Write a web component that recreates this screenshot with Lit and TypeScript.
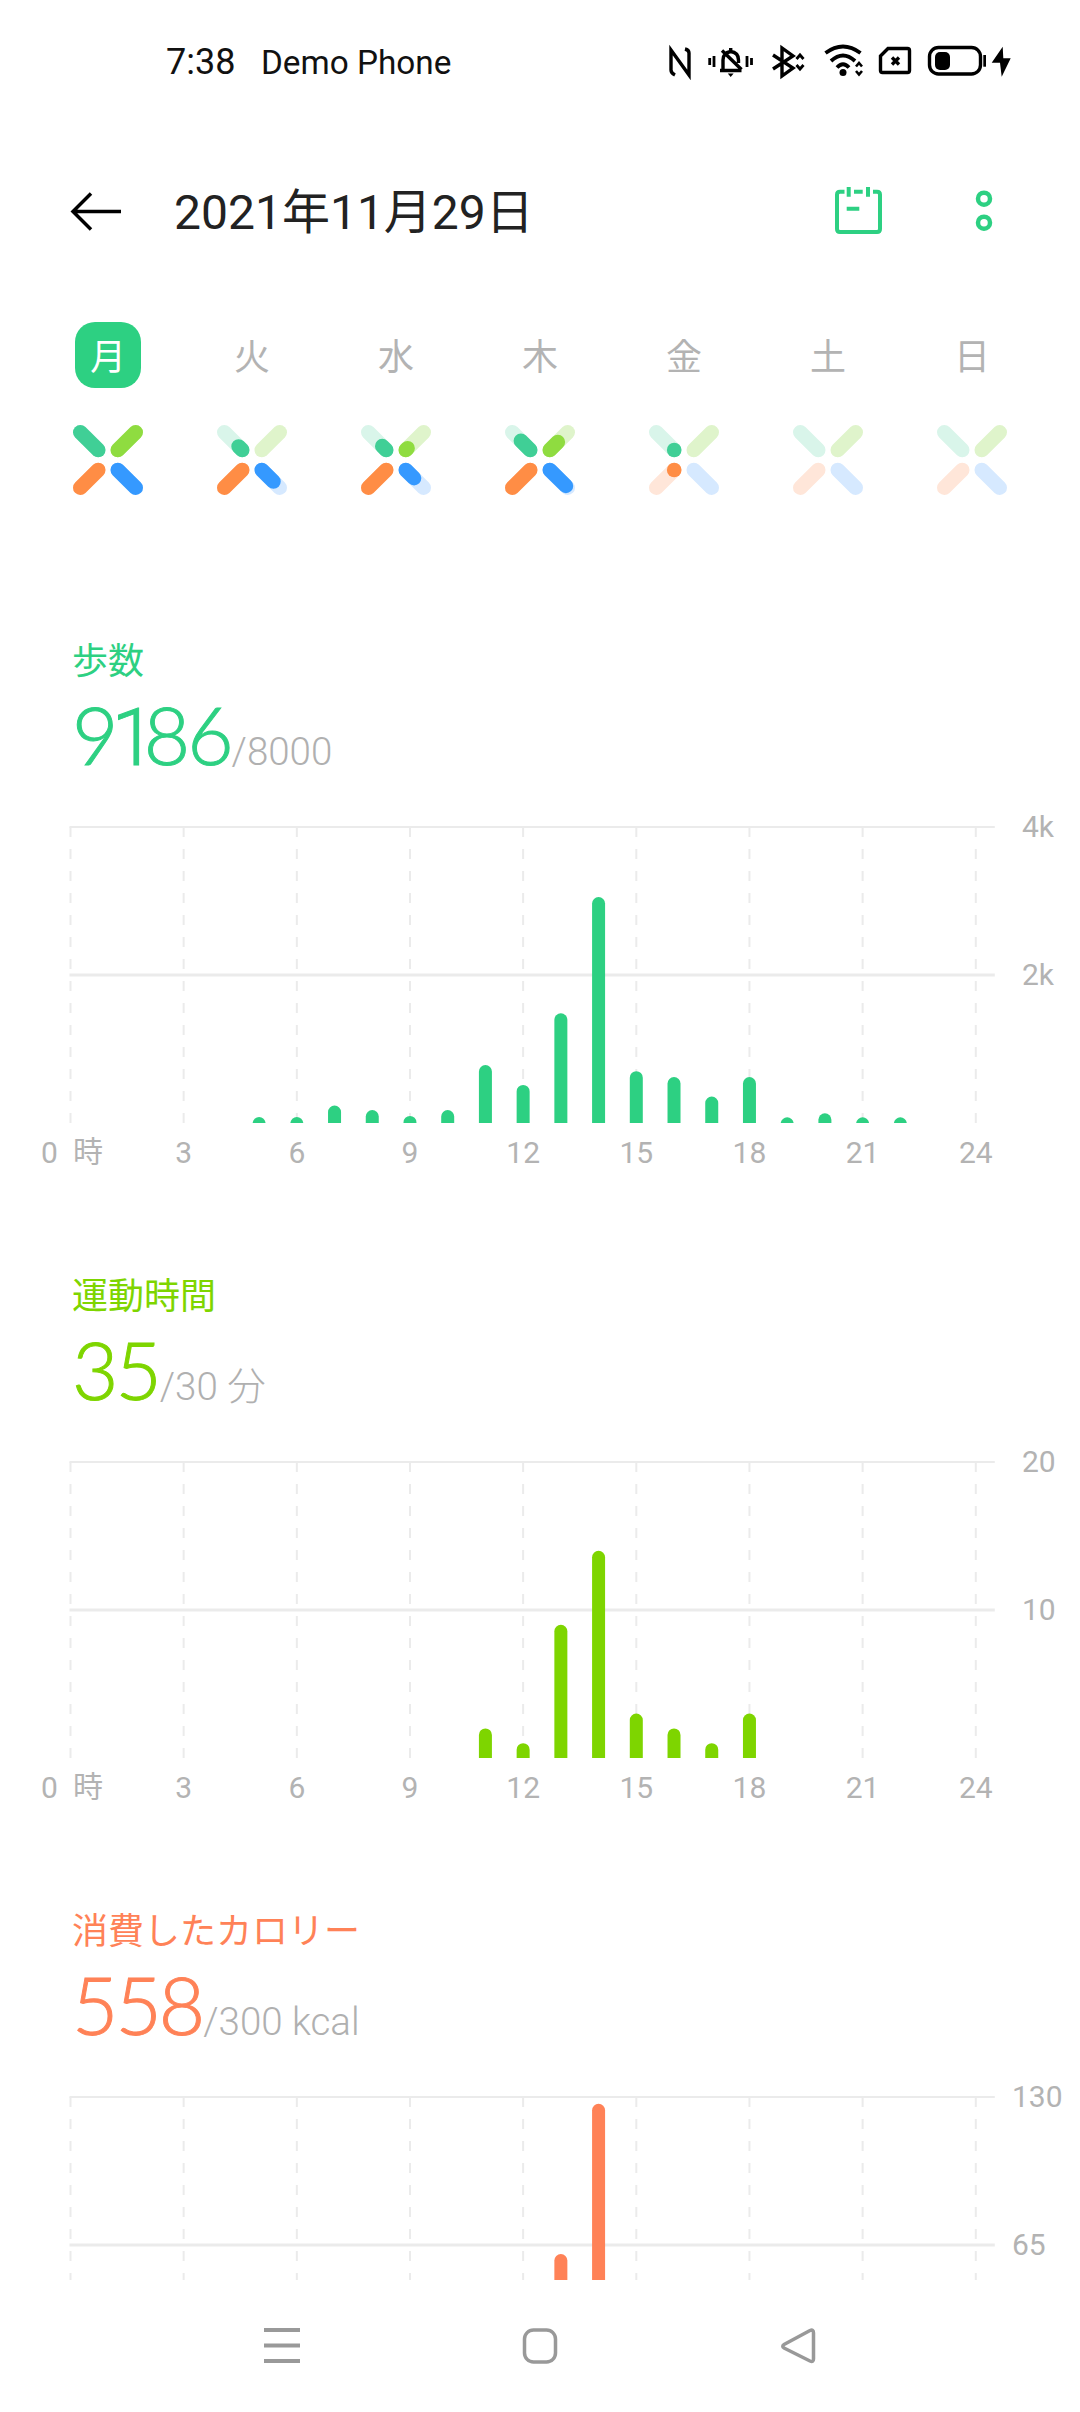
import { LitElement, html, css, svg } from "lit";
import { customElement } from "lit/decorators.js";

const X0 = 70.5;
const HOUR = 37.72;
const CHART_TOP = 20;
const CHART_H = 296;
const BAR_W = 13;

interface Metric {
  label: string;
  value: string;
  goal: string;
  color: string;
  max: number;
  yLabels: [string, string];
  yAlign: number;
  axis: boolean;
  bars: [number, number][];
}

const METRICS: Metric[] = [
  {
    label: "歩数",
    value: "9186",
    goal: "/8000",
    color: "#2dd082",
    max: 4000,
    yLabels: ["4k", "2k"],
    yAlign: 1022,
    axis: true,
    bars: [
      [5, 81], [6, 81], [7, 236], [8, 176], [9, 95], [10, 176], [11, 784], [12, 514], [13, 1482],
      [14, 3054], [15, 700], [16, 620], [17, 357], [18, 622], [19, 77], [20, 131], [21, 77], [22, 77],
    ],
  },
  {
    label: "運動時間",
    value: "35",
    goal: "/30 分",
    color: "#7ed500",
    max: 20,
    yLabels: ["20", "10"],
    yAlign: 1022,
    axis: true,
    bars: [[11, 2], [12, 1], [13, 9], [14, 14], [15, 3], [16, 2], [17, 1], [18, 3]],
  },
  {
    label: "消費したカロリー",
    value: "558",
    goal: "/300 kcal",
    color: "#ff8257",
    max: 130,
    yLabels: ["130", "65"],
    yAlign: 1012,
    axis: false,
    bars: [[13, 61], [14, 127]],
  },
];

// fraction of each arm filled: top-left, top-right, bottom-left, bottom-right (-1 = nothing)
const DAYS: { name: string; arms: [number, number, number, number] }[] = [
  { name: "月", arms: [1, 1, 1, 1] },
  { name: "火", arms: [0.2, -1, 1, 0.65] },
  { name: "水", arms: [0.22, 0.1, 1, 0.46] },
  { name: "木", arms: [0.52, 0.45, 1, 0.9] },
  { name: "金", arms: [0, -1, 0, -1] },
  { name: "土", arms: [-1, -1, -1, -1] },
  { name: "日", arms: [-1, -1, -1, -1] },
];

const ARMS = [
  { inner: [25.2, 25], outer: [7.3, 7.3], full: "#40cf96", faint: "#d9f5ea" },
  { inner: [44.8, 25], outer: [62.7, 7.3], full: "#8fdc40", faint: "#dff4cb" },
  { inner: [25.2, 45], outer: [7.3, 62.7], full: "#ff8d45", faint: "#ffe6d9" },
  { inner: [44.8, 45], outer: [62.7, 62.7], full: "#3599ff", faint: "#d6e9ff" },
];

function barPath(cx: number, h: number, base: number): string {
  const r = BAR_W / 2;
  if (h < r) {
    const c = Math.sqrt(r * r - (r - h) * (r - h));
    return `M${cx - c} ${base}A${r} ${r} 0 0 1 ${cx + c} ${base}Z`;
  }
  const top = base - h;
  return `M${cx - r} ${base}V${top + r}A${r} ${r} 0 0 1 ${cx + r} ${top + r}V${base}Z`;
}

@customElement("app-root")
export class AppRoot extends LitElement {
  static styles = css`
    :host {
      display: flex;
      flex-direction: column;
      width: 1080px;
      height: 2412px;
      background: #fff;
      overflow: hidden;
      font-family: Roboto, "Noto Sans CJK JP", sans-serif;
      color: #222;
    }
    .status {
      flex: none;
      height: 122px;
      display: flex;
      align-items: center;
      padding-left: 166px;
      font-size: 36px;
      color: #111;
      box-sizing: border-box;
    }
    .status .clock { width: 95px; padding-top: 2px; }
    .status .carrier { font-size: 33.3px; padding-top: 2px; }
    .status .icons { margin-left: auto; margin-right: 69px; margin-top: 2px; display: block; }
    .header {
      flex: none;
      height: 178px;
      display: flex;
      align-items: center;
    }
    .header .back { margin-left: 70px; margin-right: 52px; display: block; }
    .header .title { font-size: 48px; color: #222; flex: 1; padding-bottom: 6px; }
    .header .actions { display: block; margin-right: 84px; }
    .week {
      flex: none;
      display: grid;
      grid-template-columns: repeat(7, 144px);
      padding-left: 36px;
      margin-top: 22px;
      justify-items: center;
      row-gap: 37px;
    }
    .day {
      width: 66px;
      height: 66px;
      box-sizing: border-box;
      padding-bottom: 2px;
      border-radius: 20px;
      display: flex;
      align-items: center;
      justify-content: center;
      font-size: 36px;
      color: #b3b3b3;
    }
    .day.active { background: #2dd082; color: #fff; }
    .cross { display: block; }
    .scroll {
      flex: 1;
      min-height: 0;
      overflow: hidden;
      padding-top: 141.5px;
      display: flex;
      flex-direction: column;
      gap: 95px;
    }
    .section { flex: none; }
    .label {
      font-size: 36px;
      height: 48px;
      line-height: 51px;
      padding-left: 72px;
    }
    .reading {
      display: flex;
      align-items: baseline;
      padding-left: 72px;
      height: 122px;
      line-height: 98px;
    }
    .value {
      font-family: Lato, sans-serif;
      font-weight: 300;
      font-size: 80px;
      letter-spacing: -3px;
      -webkit-text-stroke: 1px currentColor;
    }
    .goal {
      font-family: Roboto, "Noto Sans CJK JP", sans-serif;
      font-weight: 300;
      font-size: 38.5px;
      color: #b0b0b0;
      margin-left: 1px;
    }
    .before-one { letter-spacing: -7px; }
    .one {
      font-family: Roboto, sans-serif;
      font-weight: 300;
      letter-spacing: -12px;
    }
    .chart { display: block; }
    .chart text {
      font-family: Roboto, "Noto Sans CJK JP", sans-serif;
      font-size: 30px;
      fill: #b3b3b3;
    }
    .nav { flex: none; height: 132px; background: #fff; }
    .nav svg { display: block; }
  `;

  private cross(arms: [number, number, number, number]) {
    return html`<svg class="cross" width="70" height="70" viewBox="0 0 70 70" fill="none" stroke-width="14.6" stroke-linecap="round">
      ${ARMS.map((a, i) => {
        const f = arms[i];
        const ex = a.inner[0] + (a.outer[0] - a.inner[0]) * f;
        const ey = a.inner[1] + (a.outer[1] - a.inner[1]) * f;
        return svg`<line x1=${a.inner[0]} y1=${a.inner[1]} x2=${a.outer[0]} y2=${a.outer[1]} stroke=${a.faint}></line>
          ${f >= 0 ? svg`<line x1=${a.inner[0]} y1=${a.inner[1]} x2=${ex} y2=${ey} stroke=${a.full}></line>` : null}`;
      })}
    </svg>`;
  }

  private chart(m: Metric) {
    const base = CHART_TOP + CHART_H;
    const mid = CHART_TOP + CHART_H / 2;
    const ticks = [0, 3, 6, 9, 12, 15, 18, 21, 24];
    const last = X0 + 24 * HOUR;
    return html`<svg class="chart" width="1080" height="370" viewBox="0 0 1080 370">
      ${ticks.map((h) => {
        const x = X0 + h * HOUR;
        return svg`<line x1=${x} x2=${x} y1=${CHART_TOP} y2=${base} stroke="#ebebeb" stroke-width="2" stroke-dasharray="10 12"></line>`;
      })}
      <line x1=${X0 - 1} x2=${last + 19} y1=${CHART_TOP} y2=${CHART_TOP} stroke="#ebebeb" stroke-width="2"></line>
      <line x1=${X0 - 1} x2=${last + 19} y1=${mid} y2=${mid} stroke="#ebebeb" stroke-width="3"></line>
      ${m.bars.map(([h, v]) => svg`<path d=${barPath(X0 + h * HOUR, (v / m.max) * CHART_H, base)} fill=${m.color}></path>`)}
      <text x=${m.yAlign} y=${CHART_TOP + 10}>${m.yLabels[0]}</text>
      <text x=${m.yAlign} y=${mid + 10}>${m.yLabels[1]}</text>
      ${m.axis
        ? svg`${ticks.map((h) => svg`<text x=${X0 + h * HOUR - (h === 0 ? 21 : 0)} y=${base + 40} text-anchor="middle">${h}</text>`)}
            <text x="73" y=${base + 39}>時</text>`
        : null}
    </svg>`;
  }

  private digits(value: string) {
    const chars = [...value];
    return chars.map((c, i) => {
      const cls = c === "1" ? "one" : chars[i + 1] === "1" ? "before-one" : "";
      return html`<span class=${cls}>${c}</span>`;
    });
  }

  render() {
    return html`
      <div class="status">
        <span class="clock">7:38</span>
        <span class="carrier">Demo Phone</span>
        <svg class="icons" width="342" height="36" viewBox="669 44 342 36" fill="none" stroke="#000" stroke-width="3.4">
          <path d="M675 75Q671 73 671 70V50L689 75V53Q689 50 685 49"></path>
          <path d="M709.7 58V65M714 56V67M747 56V67M751.5 58V65" stroke-width="2.8"></path>
          <path d="M720 70.5H741.5M723 70V60Q723 53 730.5 51.5Q738.5 52.5 738.5 60V63M722 50.5L741.5 69.5M730.7 48V51"></path>
          <path d="M727.8 73.5H733.6L730.7 77Z" fill="#000" stroke="none"></path>
          <path d="M773 55L793 68L782 76V48L793 56L773 69"></path>
          <path d="M796.5 59L800 55L803.5 59M796.5 65L800 69L803.5 65" stroke-width="2.8"></path>
          <path d="M825.5 53Q843 40 860.5 53M831 61Q843 50 855 61M837 67.5Q843 61 849 67.5" stroke-width="3.8"></path>
          <circle cx="843" cy="72.5" r="3.5" fill="#000" stroke="none"></circle>
          <path d="M856 66.5L859 63L862 66.5M856 71L859 74.5L862 71" stroke-width="2.6"></path>
          <path d="M888 48.5H907.5Q909.5 48.5 909.5 50.5V70.5Q909.5 72.5 907.5 72.5H882.5Q880.5 72.5 880.5 70.5V56Z"></path>
          <path d="M892 57.5L899 64.5M899 57.5L892 64.5"></path>
          <rect x="929.5" y="47.5" width="51" height="26.5" rx="9"></rect>
          <rect x="935" y="52" width="15" height="18" rx="5" fill="#000" stroke="none"></rect>
          <rect x="983.3" y="55" width="2.7" height="11.7" fill="#000" stroke="none"></rect>
          <path d="M1002.7 46.7L991.7 62.7H1000L1001.7 76.7L1010.7 58.3H1003.3Z" fill="#000" stroke="none"></path>
        </svg>
      </div>
      <div class="header">
        <svg class="back" width="52" height="40" viewBox="70 191 52 40" fill="none" stroke="#000" stroke-width="3.5">
          <path d="M121 211.5H73M91 193.5L73 211.5L91 229.5"></path>
        </svg>
        <div class="title">2021年11月29日</div>
        <svg class="actions" width="162" height="48" viewBox="834 187 162 48" fill="none" stroke="#2dd082" stroke-width="4">
          <path d="M844.5 191.7H840Q837 191.7 837 194.7V229Q837 232 840 232H877Q880 232 880 229V194.7Q880 191.7 877 191.7H873"></path>
          <path d="M848.7 187V196.7M868 187V196.7M854 191.7H862.7M846.7 208.7H859.3"></path>
          <circle cx="984" cy="198.7" r="6" stroke-width="4.5"></circle>
          <circle cx="984" cy="222.7" r="6" stroke-width="4.5"></circle>
        </svg>
      </div>
      <div class="week">
        ${DAYS.map((d, i) => html`<div class="day ${i === 0 ? "active" : ""}">${d.name}</div>`)}
        ${DAYS.map((d) => this.cross(d.arms))}
      </div>
      <div class="scroll">
        ${METRICS.map(
          (m) => html`<section class="section">
            <div class="label" style="color:${m.color}">${m.label}</div>
            <div class="reading">
              <span class="value" style="color:${m.color}">${this.digits(m.value)}</span>
              <span class="goal">${m.goal}</span>
            </div>
            ${this.chart(m)}
          </section>`
        )}
      </div>
      <div class="nav">
        <svg width="1080" height="132" viewBox="0 2280 1080 132" fill="none" stroke="#999" stroke-width="3.5" stroke-linejoin="round">
          <path d="M264 2330H300M264 2345.5H300M264 2361H300" stroke-width="4"></path>
          <rect x="524.5" y="2330" width="31" height="32" rx="9"></rect>
          <path d="M813.5 2333V2359Q813.5 2362.5 810 2361L784 2348Q781.5 2346 784 2344.5L810 2330.5Q813.5 2329 813.5 2333Z"></path>
        </svg>
      </div>
    `;
  }
}
